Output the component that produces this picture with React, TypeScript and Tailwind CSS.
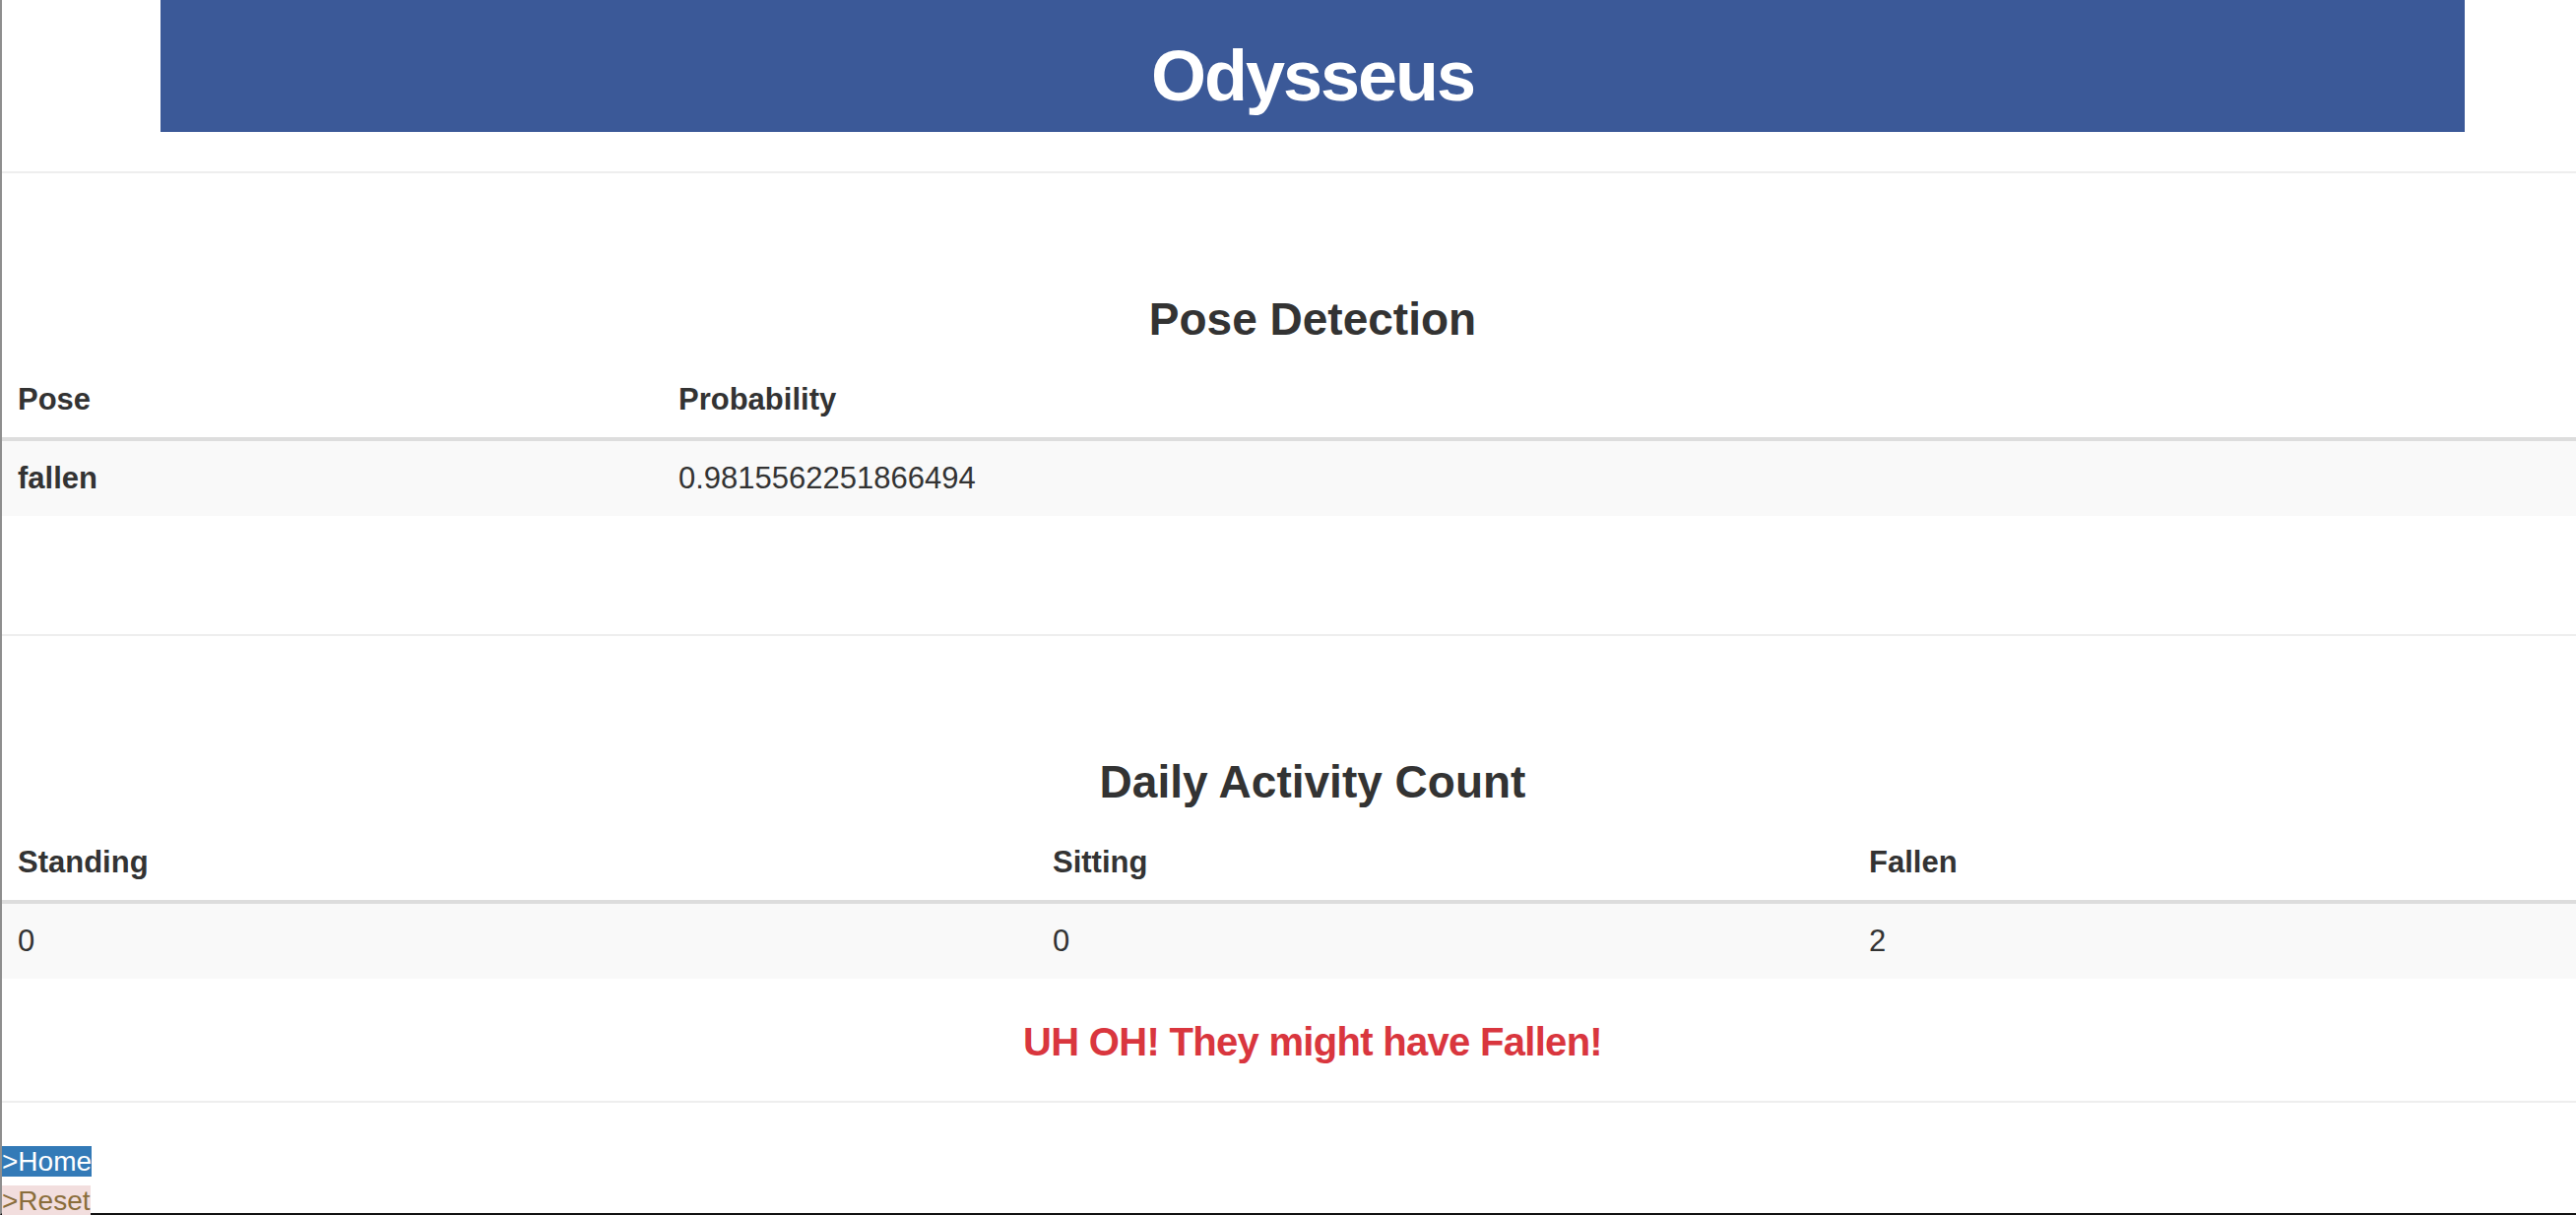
import React from "react";

const poses = [{ pose: "fallen", probability: "0.9815562251866494" }];
const counts = { standing: 0, sitting: 0, fallen: 2 };

export default function App() {
  return (
    <div className="w-[2616px] h-[1234px] overflow-hidden bg-white font-['Liberation_Sans',Arial,sans-serif] text-[#333]">
      <div className="w-[2664px] h-full border-l-2 border-l-[#8e8e8e] border-b-2 border-b-[#111]">
        {/* header bar */}
        <div className="mx-auto w-[2340px] h-[134px] bg-[#3b5998] pt-[20px]">
          <h1 className="text-center text-white text-[72px] font-bold leading-[114px] tracking-[-2px]">Odysseus</h1>
        </div>

        <hr className="mt-[40px] h-[2px] border-0 bg-[#eee]" />

        {/* pose detection */}
        <h2 className="mt-[122px] text-center text-[46px] font-bold leading-[52px]">Pose Detection</h2>
        <table className="mt-[20px] w-full table-fixed border-separate border-spacing-0 text-[31px]">
          <colgroup>
            <col className="w-[671px]" />
            <col />
          </colgroup>
          <thead>
            <tr>
              <th className="px-4 pt-4 pb-[18px] text-left font-bold leading-[40px] border-b-4 border-[#ddd]">Pose</th>
              <th className="px-4 pt-4 pb-[18px] text-left font-bold leading-[40px] border-b-4 border-[#ddd]">Probability</th>
            </tr>
          </thead>
          <tbody>
            {poses.map((p) => (
              <tr key={p.pose} className="bg-[#f9f9f9]">
                <th className="px-4 py-[18px] text-left font-bold leading-[40px]">{p.pose}</th>
                <td className="px-4 py-[18px] leading-[40px]">{p.probability}</td>
              </tr>
            ))}
          </tbody>
        </table>

        <hr className="mt-[120px] h-[2px] border-0 bg-[#eee]" />

        {/* daily counts */}
        <h2 className="mt-[122px] text-center text-[46px] font-bold leading-[52px]">Daily Activity Count</h2>
        <table className="mt-[20px] w-full table-fixed border-separate border-spacing-0 text-[31px]">
          <colgroup>
            <col className="w-[1051px]" />
            <col className="w-[829px]" />
            <col />
          </colgroup>
          <thead>
            <tr>
              <th className="px-4 pt-4 pb-[18px] text-left font-bold leading-[40px] border-b-4 border-[#ddd]">Standing</th>
              <th className="px-4 pt-4 pb-[18px] text-left font-bold leading-[40px] border-b-4 border-[#ddd]">Sitting</th>
              <th className="px-4 pt-4 pb-[18px] text-left font-bold leading-[40px] border-b-4 border-[#ddd]">Fallen</th>
            </tr>
          </thead>
          <tbody>
            <tr className="bg-[#f9f9f9]">
              <td className="px-4 py-[18px] leading-[40px]">{counts.standing}</td>
              <td className="px-4 py-[18px] leading-[40px]">{counts.sitting}</td>
              <td className="px-4 py-[18px] leading-[40px]">{counts.fallen}</td>
            </tr>
          </tbody>
        </table>

        {counts.fallen > 0 && (
          <p className="mt-[42px] text-center text-[40px] font-bold leading-[44px] tracking-[-0.7px] text-[#d9363e]">UH OH! They might have Fallen!</p>
        )}

        <hr className="mt-[38px] h-[2px] border-0 bg-[#eee]" />

        <div className="mt-[40px] text-[28px] leading-[40px]">
          <div>
            <a href="#" className="bg-[#337ab7] text-white">&gt;Home</a>
          </div>
          <div>
            <a href="#" className="bg-[#f2dede] text-[#8a6d3b]">&gt;Reset</a>
          </div>
        </div>
      </div>
    </div>
  );
}
